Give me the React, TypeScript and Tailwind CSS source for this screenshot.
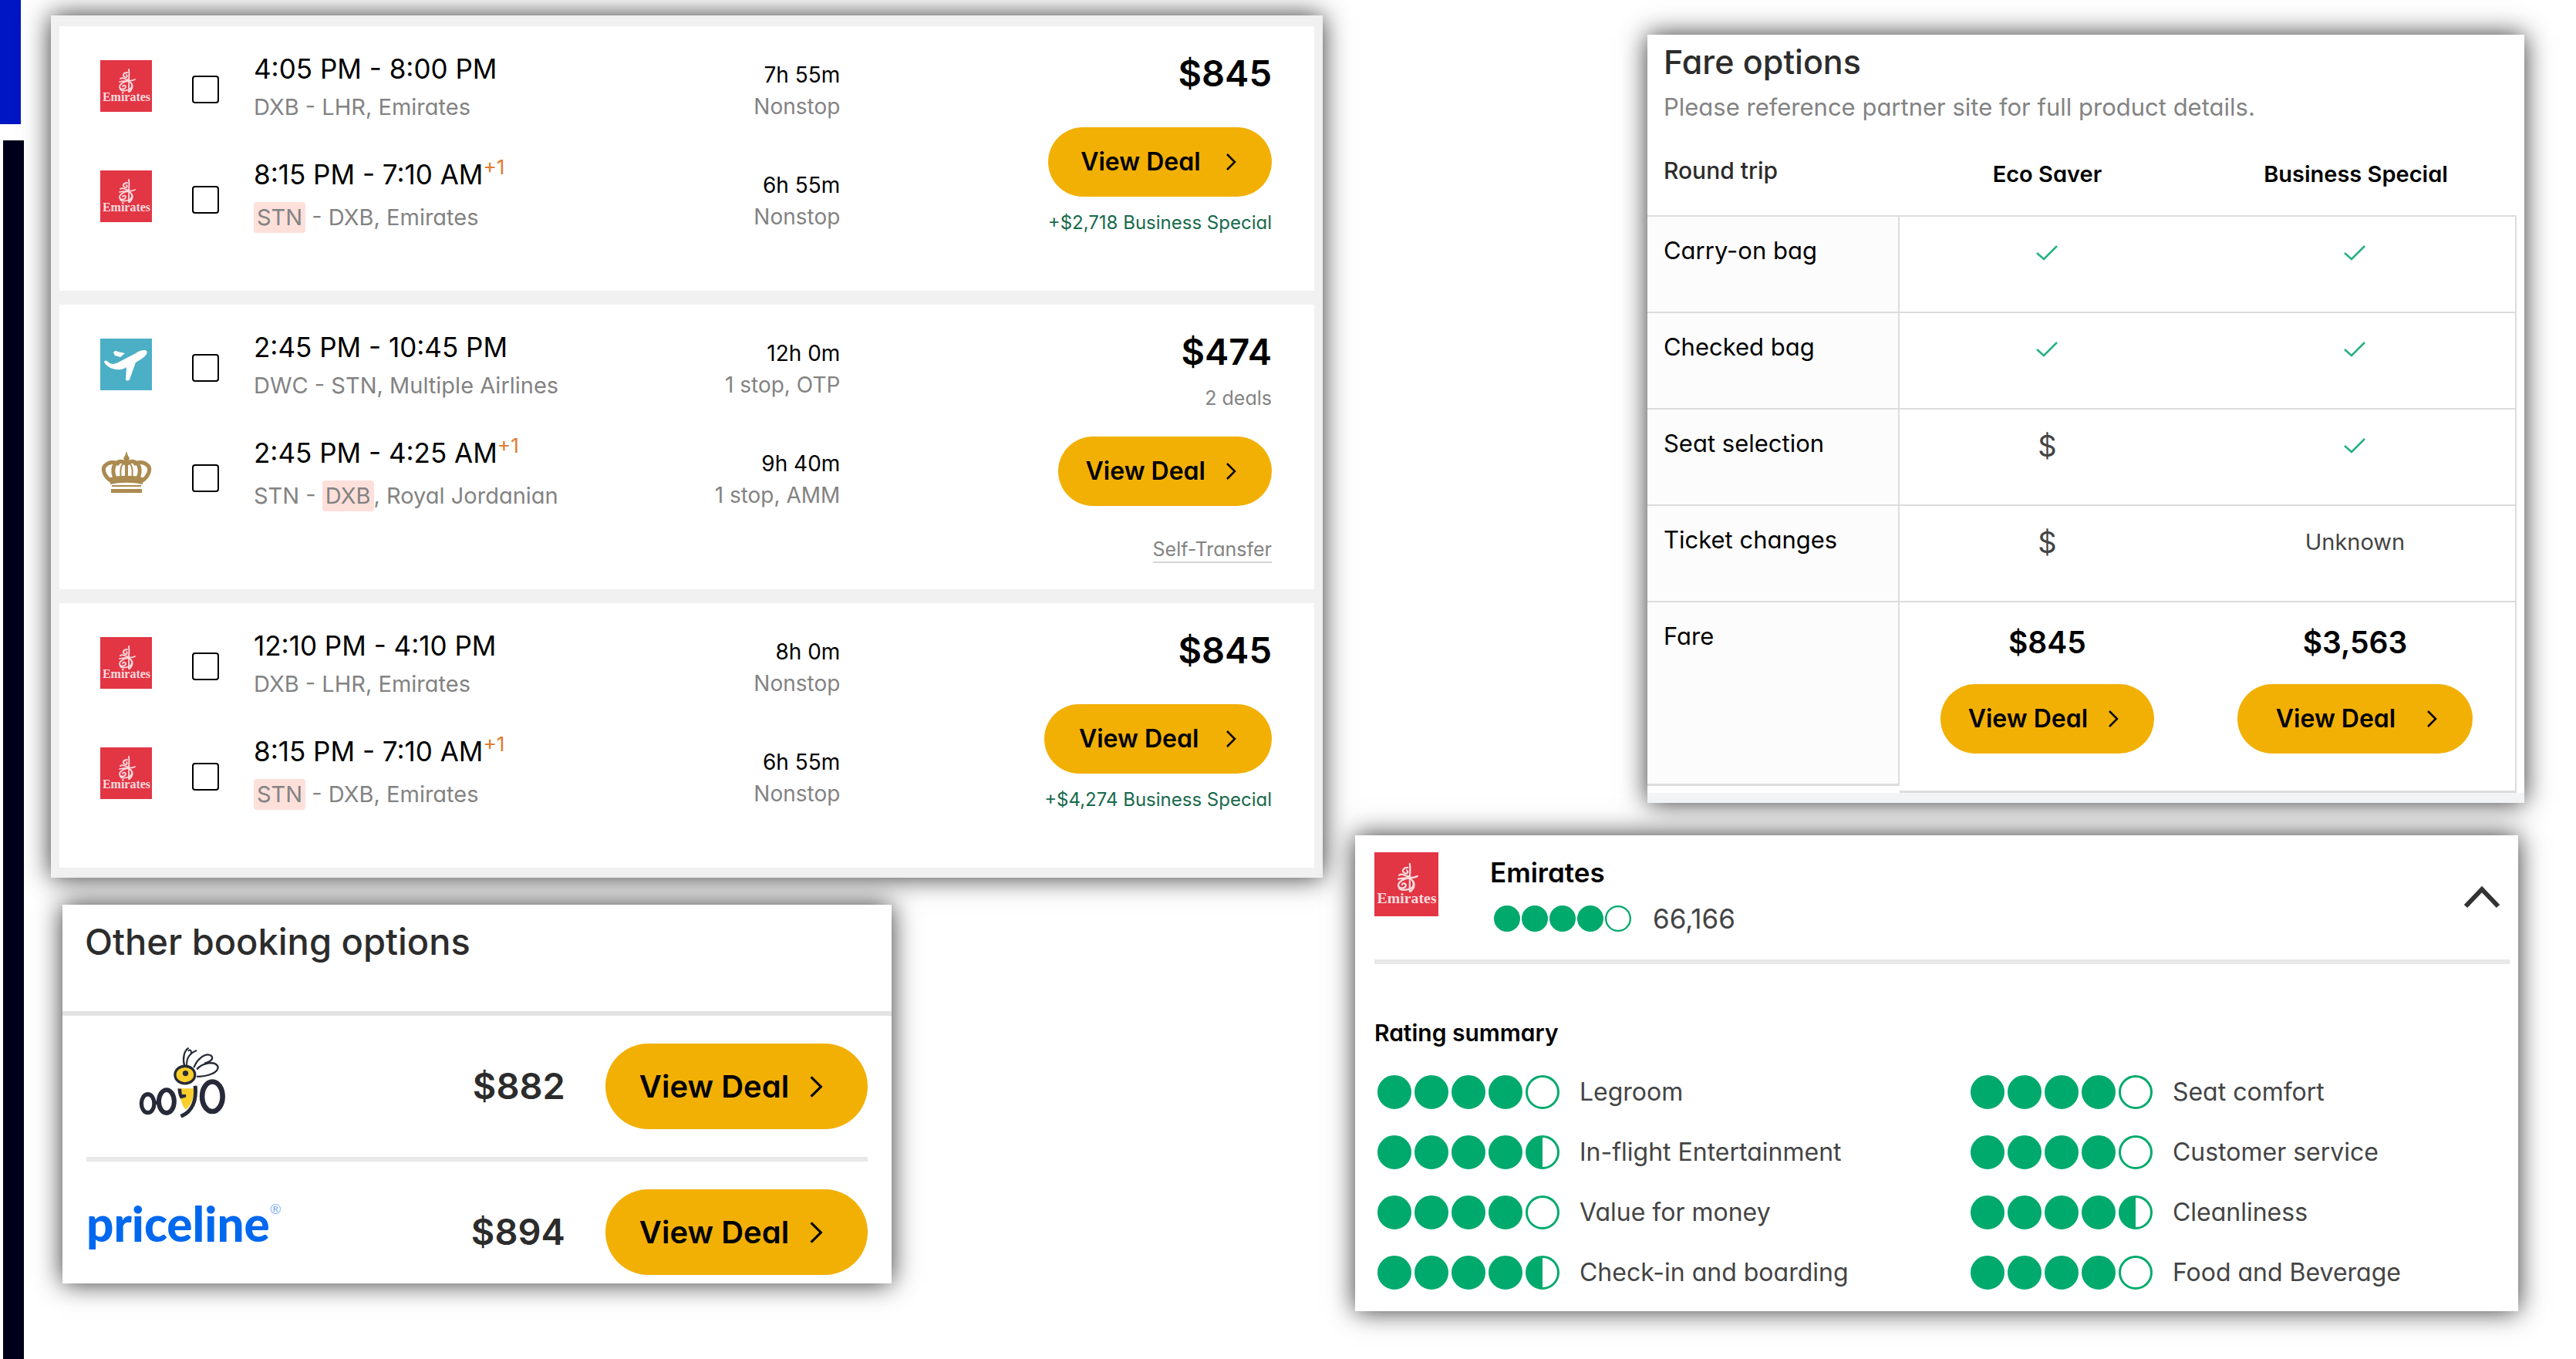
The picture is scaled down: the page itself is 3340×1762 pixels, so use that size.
import { useState } from "react";
import { clsx } from "clsx";

type AirlineLogo = "emirates" | "multiple" | "royal";

type Leg = {
  logo: AirlineLogo;
  time: string;
  nextDay?: boolean;
  from: string;
  to: string;
  highlight?: "from" | "to";
  airline: string;
  duration: string;
  stops: string;
};

type Flight = {
  id: string;
  legs: Array<Leg>;
  price: string;
  deals?: string;
  upgrade?: string;
  selfTransfer?: boolean;
};

const emiratesReturn: Leg = {
  logo: "emirates",
  time: "8:15 PM - 7:10 AM",
  nextDay: true,
  from: "STN",
  to: "DXB",
  highlight: "from",
  airline: "Emirates",
  duration: "6h 55m",
  stops: "Nonstop",
};

const flights: Array<Flight> = [
  {
    id: "ek-1",
    price: "$845",
    upgrade: "+$2,718 Business Special",
    legs: [
      {
        logo: "emirates",
        time: "4:05 PM - 8:00 PM",
        from: "DXB",
        to: "LHR",
        airline: "Emirates",
        duration: "7h 55m",
        stops: "Nonstop",
      },
      emiratesReturn,
    ],
  },
  {
    id: "rj-1",
    price: "$474",
    deals: "2 deals",
    selfTransfer: true,
    legs: [
      {
        logo: "multiple",
        time: "2:45 PM - 10:45 PM",
        from: "DWC",
        to: "STN",
        airline: "Multiple Airlines",
        duration: "12h 0m",
        stops: "1 stop, OTP",
      },
      {
        logo: "royal",
        time: "2:45 PM - 4:25 AM",
        nextDay: true,
        from: "STN",
        to: "DXB",
        highlight: "to",
        airline: "Royal Jordanian",
        duration: "9h 40m",
        stops: "1 stop, AMM",
      },
    ],
  },
  {
    id: "ek-2",
    price: "$845",
    upgrade: "+$4,274 Business Special",
    legs: [
      {
        logo: "emirates",
        time: "12:10 PM - 4:10 PM",
        from: "DXB",
        to: "LHR",
        airline: "Emirates",
        duration: "8h 0m",
        stops: "Nonstop",
      },
      emiratesReturn,
    ],
  },
];

const fareRows = [
  { label: "Carry-on bag", eco: "check", business: "check" },
  { label: "Checked bag", eco: "check", business: "check" },
  { label: "Seat selection", eco: "$", business: "check" },
  { label: "Ticket changes", eco: "$", business: "Unknown" },
];

const ratings = [
  { label: "Legroom", score: 4 },
  { label: "Seat comfort", score: 4 },
  { label: "In-flight Entertainment", score: 4.5 },
  { label: "Customer service", score: 4 },
  { label: "Value for money", score: 4 },
  { label: "Cleanliness", score: 4.5 },
  { label: "Check-in and boarding", score: 4.5 },
  { label: "Food and Beverage", score: 4 },
];

function EmiratesLogo({ className }: { className: string }) {
  return (
    <svg viewBox="0 0 67 67" className={clsx("shrink-0", className)}>
      <rect width="67" height="67" fill="#e23645" />
      <g fill="none" stroke="#fbdcdf" strokeWidth="1.8" strokeLinecap="round">
        <path d="M37 12 C38 18 37 23 37 28" />
        <path d="M35 16 C30 16 28 20 32 22 C34 23 36 21 34 19" />
        <path d="M26 24 C30 21 32 26 36 25" />
        <path d="M25 28 C32 26 40 28 45 25" />
        <path d="M37 27 C31 27 25 31 25 35 C26 39 32 38 33 35 C33 32 29 32 29 34" />
        <path d="M37 28 C42 29 42 36 38 38 C33 40 28 40 26 38" />
        <path d="M37 30 V41 M41 31 C43 35 41 38 38 41" />
      </g>
      <text
        x="34"
        y="53"
        textAnchor="middle"
        fill="#fbdcdf"
        className="font-['Liberation_Serif',serif] text-[16px] font-bold"
      >
        Emirates
      </text>
    </svg>
  );
}

function MultipleAirlinesLogo() {
  return (
    <svg viewBox="0 0 67 67" className="size-[67px] shrink-0">
      <rect width="67" height="67" fill="#4bafc6" />
      <g fill="#fff">
        <path d="M46 19 C51 15 58 14 60 16 C62 18 59 23 54 26 L46 31 C43 38 41 46 38 53 C37 55 33 55 33 53 L34 37 C29 41 22 41 16 39 C10 37 6 33 5 30 C7 27 9 29 11 31 C15 34 19 33 23 31 Z" />
        <path d="M17 18 C19 15 21 16 23 17 L32 19 L26 24 L19 22 Z" />
      </g>
    </svg>
  );
}

function RoyalJordanianLogo() {
  return (
    <svg viewBox="0 0 67 67" className="size-[67px] shrink-0">
      <g fill="none" stroke="#ab8b50" strokeWidth="5">
        <path d="M15 42 C6 37 1 26 7 21 C13 15 22 18 25 20" />
        <path d="M53 42 C62 37 67 26 61 21 C55 15 46 18 43 20" />
        <path d="M22 42 C14 32 16 20 23 17 C28 15 32 18 34 20" />
        <path d="M46 42 C54 32 52 20 45 17 C40 15 36 18 34 20" />
        <path d="M28 42 C25 32 26 22 30 19 M40 42 C43 32 42 22 38 19" strokeWidth="2" />
        <path d="M34 17 V42" strokeWidth="4" />
      </g>
      <g fill="#ab8b50">
        <path d="M34 3 L36 9 L38 12 L36 17 H32 L30 12 L32 9 Z" />
        <path d="M13 37 C26 34 42 34 55 37 V46 C42 43 26 43 13 46 Z" />
        <path d="M15 47 H53 V49 H15 Z" />
        <path d="M14 52 H54 V57 H14 Z" />
      </g>
    </svg>
  );
}

function OogoLogo() {
  return (
    <svg viewBox="30 40 340 280" role="img" aria-label="Oogo" className="h-[93px] w-[113px]">
      <g fill="none" stroke="#272a38">
        <ellipse cx="65" cy="265" rx="25" ry="36" strokeWidth="16" />
        <ellipse cx="138" cy="257" rx="30" ry="45" strokeWidth="18" />
        <ellipse cx="317" cy="238" rx="40" ry="58" strokeWidth="20" />
        <path d="M92 262 H108" strokeWidth="14" />
        <path d="M208 118 C200 90 206 60 224 48" strokeWidth="7" />
        <path d="M217 118 C215 88 228 68 256 58 M222 60 C232 52 238 60 232 74" strokeWidth="6" />
        <path d="M245 125 C256 92 290 64 312 78 C326 92 305 104 286 108" strokeWidth="7" />
        <path d="M256 132 C280 104 330 98 339 122 C340 146 296 160 256 160" strokeWidth="7" />
      </g>
      <path d="M190 206 H246 C246 246 232 276 212 288 C197 270 188 240 190 206 Z" fill="#f8cf2c" />
      <path d="M182 206 C182 222 186 236 192 246 L214 240 V230 L198 230 L196 208 Z" fill="#272a38" />
      <path d="M250 196 C256 250 240 296 194 315" fill="none" stroke="#272a38" strokeWidth="15" />
      <ellipse cx="210" cy="153" rx="39" ry="34" fill="#f8cf2c" stroke="#272a38" strokeWidth="10" />
      <circle cx="212" cy="147" r="11" fill="#272a38" />
    </svg>
  );
}

function LogoFor({ logo }: { logo: AirlineLogo }) {
  if (logo === "multiple") return <MultipleAirlinesLogo />;
  if (logo === "royal") return <RoyalJordanianLogo />;
  return <EmiratesLogo className="size-[67px]" />;
}

function CheckIcon() {
  return (
    <svg viewBox="0 0 28 20" className="mx-auto h-5 w-7" role="img" aria-label="Included">
      <path d="M1 10 L10 18 L27 1" fill="none" stroke="#23b083" strokeWidth="2.5" />
    </svg>
  );
}

function DealButton({ size = "md" }: { size?: "md" | "lg" }) {
  return (
    <button
      type="button"
      className={clsx(
        "flex items-center rounded-full bg-[#f2b005] font-semibold whitespace-nowrap text-black",
        size === "md" && "h-[90px] pr-[46px] pl-4 text-[32px]",
        size === "lg" && "h-[111px] pr-[58px] pl-6 text-[40px]"
      )}
    >
      <span className="flex-1 pr-[26px] pl-5 text-center">View Deal</span>
      <svg
        viewBox="0 0 14 22"
        className={clsx("shrink-0", size === "md" ? "h-[22px] w-3.5" : "h-7 w-[18px]")}
      >
        <path d="M2 1 L12 11 L2 21" fill="none" stroke="#000" strokeWidth="2.5" />
      </svg>
    </button>
  );
}

function AirportCode({ code, marked }: { code: string; marked: boolean }) {
  if (!marked) return <>{code}</>;
  return <mark className="inline-block rounded bg-[#fee0da] px-1 leading-10 text-inherit">{code}</mark>;
}

function LegRow({ leg }: { leg: Leg }) {
  return (
    <li className="flex h-[143px] items-start">
      <div className="pt-[11px]">
        <LogoFor logo={leg.logo} />
      </div>
      <input
        type="checkbox"
        aria-label={leg.time}
        className="mt-[31px] ml-[52px] h-9 w-[35px] shrink-0 appearance-none rounded-sm border-2 border-black bg-white checked:bg-black"
      />
      <div className="ml-[45px] flex-1">
        <div className={clsx("h-11 text-[35px]", leg.nextDay ? "leading-8" : "leading-11")}>
          {leg.time}
          {leg.nextDay && <sup className="text-[#e07b31]">+1</sup>}
        </div>
        <div className="text-[29px] leading-14 text-[#838383]">
          <AirportCode code={leg.from} marked={leg.highlight === "from"} />
          {" - "}
          <AirportCode code={leg.to} marked={leg.highlight === "to"} />
          {", " + leg.airline}
        </div>
      </div>
      <div className="pt-2.5 text-right text-[28px] leading-[41px]">
        <div>{leg.duration}</div>
        <div className="text-[#838383]">{leg.stops}</div>
      </div>
    </li>
  );
}

function FlightCard({ flight }: { flight: Flight }) {
  return (
    <article className="flex bg-white pt-[33px] pr-[55px] pb-6 pl-[53px]">
      <ul className="flex-12">
        {flight.legs.map((leg) => (
          <LegRow key={leg.time} leg={leg} />
        ))}
      </ul>
      <div className="flex flex-7 justify-end">
        <div className="flex flex-col text-right">
          <strong className="text-[47px] leading-14 font-semibold">{flight.price}</strong>
          {flight.deals && (
            <span className="mt-3.5 -mb-2.5 text-[25px] leading-9 text-[#838383]">{flight.deals}</span>
          )}
          <div className="mt-[42px] flex flex-col">
            <DealButton />
          </div>
          {flight.upgrade && (
            <span className="mt-4 text-[24px] leading-9 text-[#17694c]">{flight.upgrade}</span>
          )}
          {flight.selfTransfer && (
            <div className="mt-10 pb-2.5 text-[25px] leading-8 text-[#838383]">
              <span className="inline-block border-b-2 border-[#d4d4d4]">Self-Transfer</span>
            </div>
          )}
        </div>
      </div>
    </article>
  );
}

function BookingOptions() {
  return (
    <section className="ml-[15px] w-[65.2%] bg-white pb-[11px] shadow-[0_0_32px_rgba(0,0,0,0.8)]">
      <h2 className="h-[144px] border-b-6 border-[#e3e3e3] px-[29px] pt-5 text-[47px] leading-14 font-medium text-[#2c2c2c]">
        Other booking options
      </h2>
      <ul className="px-[31px]">
        <li className="flex items-center border-b-6 border-[#e8e8e8] py-9">
          <div className="flex-1 pb-3 pl-[68px]">
            <OogoLogo />
          </div>
          <strong className="mr-[52px] text-[47px] font-semibold text-[#2c2c2c]">$882</strong>
          <DealButton size="lg" />
        </li>
        <li className="flex items-center pt-9">
          <div className="flex flex-1 items-start pb-6 font-['Lato',sans-serif] text-[#0068ef]">
            <span className="text-[62px] leading-[80px] font-black">priceline</span>
            <span className="pt-2 text-[18px] text-[#7db2f7]">®</span>
          </div>
          <strong className="mr-[52px] text-[47px] font-semibold text-[#2c2c2c]">$894</strong>
          <DealButton size="lg" />
        </li>
      </ul>
    </section>
  );
}

function FareValue({ value }: { value: string }) {
  if (value === "check") return <CheckIcon />;
  return <span className={value === "$" ? "text-[38px]" : "text-[29px]"}>{value}</span>;
}

function FareOptions() {
  return (
    <section className="ml-auto w-3/4 bg-white shadow-[0_0_32px_rgba(0,0,0,0.8)]">
      <h2 className="px-[21px] pt-[7px] text-[43px] leading-14 font-medium text-[#2c2c2c]">
        Fare options
      </h2>
      <p className="mt-[11px] px-[21px] text-[31px] leading-10 text-[#838383]">
        Please reference partner site for full product details.
      </p>
      <div className="pr-2.5">
        <table className="w-full table-fixed border-separate border-spacing-0">
          <thead className="align-top text-[29px] leading-10">
            <tr className="h-[120px]">
              <th className="w-[29%] px-[21px] pt-[42px] text-left text-[30px] font-medium text-[#2c2c2c]">
                Round trip
              </th>
              <th className="w-[34%] pt-[47px] font-semibold">Eco Saver</th>
              <th className="pt-[47px] font-semibold">Business Special</th>
            </tr>
          </thead>
          <tbody className="align-top">
            {fareRows.map((row) => (
              <tr key={row.label}>
                <th className="border-t-2 border-[#dcdcdc] text-left font-normal">
                  <div className="h-[123px] border-r-2 border-[#dcdcdc] bg-[#fcfcfc] pt-6 pl-[21px] text-[31px] leading-10">
                    {row.label}
                  </div>
                </th>
                {[row.eco, row.business].map((value, index) => (
                  <td
                    key={index}
                    className={clsx(
                      "border-t-2 border-[#dcdcdc] text-center text-[#444]",
                      index === 1 && "border-r-2"
                    )}
                  >
                    <div className="flex h-[94px] items-center justify-center">
                      <FareValue value={value} />
                    </div>
                  </td>
                ))}
              </tr>
            ))}
            <tr>
              <th className="border-t-2 border-[#dcdcdc] text-left font-normal">
                <div className="h-[238px] border-r-2 border-b-3 border-[#dcdcdc] bg-[#fcfcfc] pt-6 pl-[21px] text-[31px] leading-10">
                  Fare
                </div>
              </th>
              <td className="border-t-2 border-b-3 border-[#dcdcdc] pt-6 pb-12">
                <div className="flex flex-col items-center">
                  <strong className="mb-[26px] text-[39px] leading-14 font-semibold">$845</strong>
                  <DealButton />
                </div>
              </td>
              <td className="border-t-2 border-r-2 border-b-3 border-[#dcdcdc] px-[55px] pt-6 pb-12">
                <div className="flex flex-col text-center">
                  <strong className="mb-[26px] text-[39px] leading-14 font-semibold">$3,563</strong>
                  <DealButton />
                </div>
              </td>
            </tr>
          </tbody>
        </table>
      </div>
      <div className="h-[13px] bg-[#f3f4f6]" />
    </section>
  );
}

function Bubbles({ score, small }: { score: number; small?: boolean }) {
  return (
    <span
      role="img"
      aria-label={`${score} of 5 bubbles`}
      className={clsx("flex", small ? "gap-0.5" : "gap-1")}
    >
      {[1, 2, 3, 4, 5].map((n) => (
        <svg key={n} viewBox="0 0 44 44" className={small ? "size-[34px]" : "size-11"}>
          <circle cx="22" cy="22" r="20.5" fill="#fff" stroke="#00aa6c" strokeWidth="3" />
          {score >= n && <circle cx="22" cy="22" r="21" fill="#00aa6c" />}
          {score === n - 0.5 && <path d="M22 1 A21 21 0 0 0 22 43 Z" fill="#00aa6c" />}
        </svg>
      ))}
    </span>
  );
}

function AirlineRating() {
  const [isOpen, setIsOpen] = useState(true);

  return (
    <section className="mr-2 bg-white pr-[11px] pb-[11px] pl-[25px] shadow-[0_0_32px_rgba(0,0,0,0.8)]">
      <div className="flex h-[167px] items-start border-b-6 border-[#e8e8e8] pt-[22px]">
        <EmiratesLogo className="size-[83px]" />
        <div className="ml-[67px] flex-1">
          <h3 className="pt-1 text-[35px] leading-11 font-semibold">Emirates</h3>
          <div className="mt-4 flex items-center pl-[5px] text-[35px] leading-11 text-[#444]">
            <Bubbles score={4} small />
            <span className="ml-7">66,166</span>
          </div>
        </div>
        <button
          type="button"
          aria-label="Toggle rating summary"
          aria-expanded={isOpen}
          onClick={() => setIsOpen(!isOpen)}
          className="mt-[43px] mr-3"
        >
          <svg viewBox="0 0 48 30" className="h-[30px] w-12">
            <path d="M3 27 L24 5 L45 27" fill="none" stroke="#333" strokeWidth="6" />
          </svg>
        </button>
      </div>
      {isOpen && (
        <>
          <h4 className="mt-[69px] text-[30px] leading-10 font-semibold">Rating summary</h4>
          <ul className="mt-[18px] grid grid-cols-[11fr_10fr] pl-1">
            {ratings.map((rating) => (
              <li key={rating.label} className="flex h-[78px] items-center gap-[26px] text-[32px] text-[#444]">
                <Bubbles score={rating.score} />
                {rating.label}
              </li>
            ))}
          </ul>
        </>
      )}
    </section>
  );
}

export default function App() {
  return (
    <main className="flex min-h-screen w-full overflow-hidden bg-white pr-[67px] font-['Inter',sans-serif] text-black [font-feature-settings:'cv11']">
      <div className="flex w-[66px] shrink-0 flex-col gap-[21px]">
        <div className="h-[161px] w-[27px] bg-[#0015c4]" />
        <div className="ml-1 w-[27px] flex-1 bg-[#01001b]" />
      </div>
      <div className="grid flex-1 grid-cols-[521fr_479fr] items-start gap-[42px]">
        <div className="flex flex-col gap-[35px] pt-5">
          <section className="flex flex-col gap-[18px] bg-[#f1f1f1] px-[11px] pt-3.5 pb-[13px] shadow-[0_0_32px_rgba(0,0,0,0.8)]">
            {flights.map((flight) => (
              <FlightCard key={flight.id} flight={flight} />
            ))}
          </section>
          <BookingOptions />
        </div>
        <div className="flex flex-col gap-[42px] pt-[45px]">
          <FareOptions />
          <AirlineRating />
        </div>
      </div>
    </main>
  );
}
